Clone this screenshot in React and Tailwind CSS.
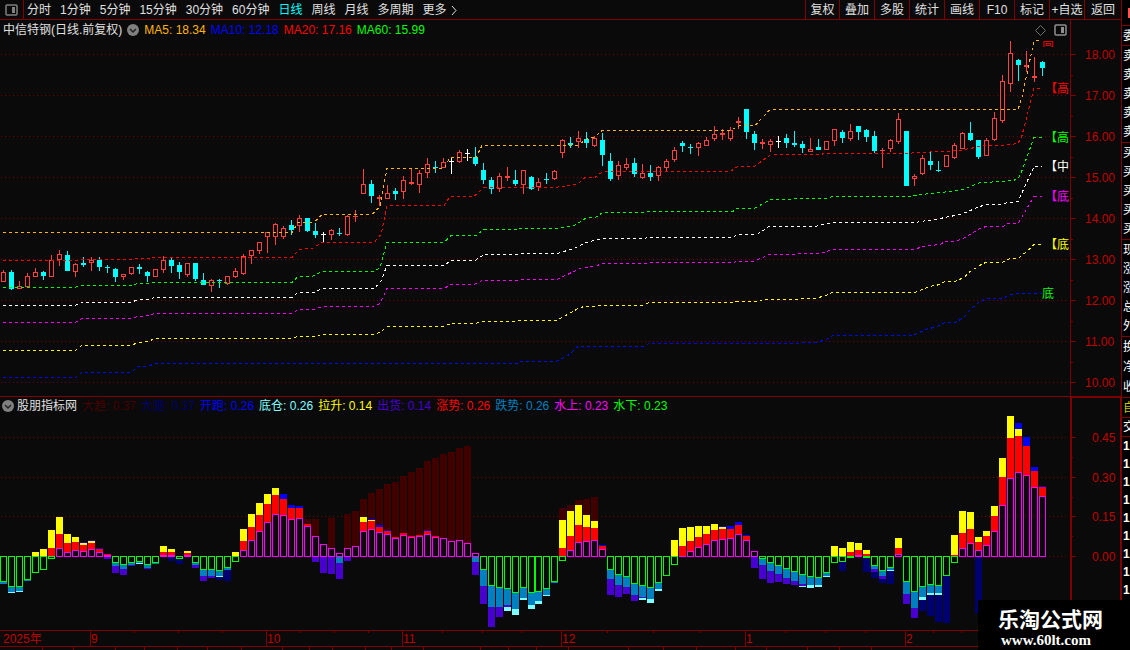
import React, { useState } from "react";

const periods = [
  "分时", "1分钟", "5分钟", "15分钟", "30分钟", "60分钟",
  "日线", "周线", "月线", "多周期", "更多",
];

const tools = ["复权", "叠加", "多股", "统计", "画线", "F10", "标记", "+自选", "返回"];

const averages = [
  { text: "MA5: 18.34", color: "text-[#ffb400]" },
  { text: "MA10: 12.18", color: "text-[#0000ff]" },
  { text: "MA20: 17.16", color: "text-[#ff0000]" },
  { text: "MA60: 15.99", color: "text-[#00ff00]" },
];

const indicators = [
  { text: "大趋: 0.37", color: "text-[#480000]" },
  { text: "大驱: 0.37", color: "text-[#000070]" },
  { text: "开跑: 0.26", color: "text-[#0000ff]" },
  { text: "底仓: 0.26", color: "text-[#80ffff]" },
  { text: "拉升: 0.14", color: "text-[#ffff00]" },
  { text: "出货: 0.14", color: "text-[#4800d0]" },
  { text: "涨势: 0.26", color: "text-[#ff0000]" },
  { text: "跌势: 0.26", color: "text-[#0080c0]" },
  { text: "水上: 0.23", color: "text-[#ff00ff]" },
  { text: "水下: 0.23", color: "text-[#00ff00]" },
];

// one candle per entry: kind, high, body top, body bottom, low
const candles = `
r270,272,282,282 c270,272,289,290 r281,286,289,289 r273,276,287,287 r268,272,277,277
c271,272,276,280 r255,260,277,277 r250,254,260,266 c251,255,271,271 r263,264,272,277
c257,263,265,267 r257,260,263,271 c257,260,267,271 c265,267,268,273 c268,269,277,282
r274,274,277,280 r267,267,274,275 c264,267,269,274 c271,272,276,282 r269,269,277,277
r256,260,270,273 c258,260,266,273 c262,265,272,279 r263,263,275,277 c263,263,279,281
c273,280,285,285 r279,280,286,292 c279,280,281,288 r276,276,284,285 r268,271,277,278
r254,256,274,275 r250,250,256,264 r242,242,251,254 r232,232,237,253 r223,224,237,245
r226,228,237,239 c220,225,230,235 r215,218,226,232 c218,218,231,232 c223,231,235,238
w232,234,235,242 r229,230,235,240 c228,233,234,236 r215,216,235,236 r210,216,217,222
r169,184,194,194 c180,184,196,203 r195,197,199,206 r185,193,199,199 c188,191,194,200
r176,180,192,199 r169,182,184,185 r170,173,185,193 r158,164,173,178 c161,167,168,173
r158,162,168,168 w158,161,162,174 r150,152,162,163 w149,153,154,161 c147,157,164,166
c163,170,180,184 c177,180,189,194 r173,176,189,192 r167,176,178,181 c170,180,184,186
r170,170,185,194 c176,177,189,190 r178,182,187,191 c173,179,180,184 r170,171,179,180
r139,140,153,158 c137,143,145,148 r131,138,142,148 c132,139,143,148 r136,138,146,147
c133,140,155,166 c153,161,179,181 r161,165,176,180 r158,164,168,170 c158,163,174,177
r164,173,178,179 c165,173,177,181 r166,167,176,181 r159,161,168,172 r147,150,160,162
c141,143,146,152 c144,147,148,154 r142,143,148,156 r137,140,146,146 r126,134,139,141
r129,133,135,140 r127,130,139,141 r117,121,123,129 c109,109,132,139 c131,134,143,150
r139,142,144,149 r139,141,145,152 w136,141,142,148 c134,138,143,148 c131,143,145,147
c141,144,148,153 r138,149,152,152 c139,147,150,150 r141,141,150,150 r129,129,141,146
c130,132,138,143 r124,131,139,141 c126,126,132,140 c129,130,137,142 c131,136,151,153
r148,150,151,168 r139,140,149,152 r113,119,142,144 c131,131,186,186 r174,176,179,186
r155,158,174,175 c152,161,165,170 c161,170,171,172 r155,155,167,167 r143,145,158,159
r132,133,149,149 c122,133,140,141 c140,140,157,159 r138,140,156,156 r112,118,140,141
r75,81,121,123 r41,53,84,92 c59,60,65,81 r51,65,67,72 r57,76,78,82 c61,62,68,76
`
  .trim()
  .split(/\s+/)
  .map((entry) => {
    const [high, top, bottom, low] = entry.slice(1).split(",").map(Number);
    return { kind: entry[0], high, top, bottom, low };
  });

const bands = [
  {
    color: "#ffb414",
    points:
      "3,232 292,232 298,222 312,222 316,220 322,214 372,214 380,206 387,168 444,168 450,157 476,157 482,145 577,145 588,138 594,137 602,130 730,130 740,125 755,125 770,109 1018,109 1022,97 1034,40 1042,40",
  },
  {
    color: "#ff0000",
    points:
      "3,260 80,260 82,259 134,259 136,258 150,258 155,257 292,257 299,249 312,248 322,242 374,242 381,234 387,205 444,205 450,196 474,196 484,187 553,187 563,186 577,184 585,177 595,177 603,171 730,171 738,166 754,166 771,154 820,154 825,153 905,153 920,152 960,150 975,147 983,145 1004,145 1018,143 1022,135 1034,88 1042,88",
  },
  {
    color: "#00ff00",
    points:
      "3,287 75,287 80,285 131,285 138,283 148,283 155,282 292,282 298,276 312,276 322,271 374,271 380,267 387,242 444,242 451,235 476,235 484,229 515,229 519,228 555,228 574,225 587,217 595,217 603,212 645,212 649,211 733,211 737,208 754,208 771,199 790,199 798,198 828,198 832,196 908,196 930,193 960,190 980,182 1004,181 1018,179 1022,170 1034,137 1042,137",
  },
  {
    color: "#ffffff",
    points:
      "3,305 75,305 82,302 131,302 138,299 148,299 155,297 292,297 298,292 314,292 322,288 373,288 380,283 387,265 444,265 451,260 475,260 484,254 517,254 520,253 557,253 574,248 586,242 602,238 644,238 648,237 733,237 737,234 757,234 769,226 815,226 832,222 915,222 940,218 955,215 963,213 980,206 986,204 1000,204 1008,202 1018,201 1034,166 1042,166",
  },
  {
    color: "#ff00ff",
    points:
      "3,322 75,322 82,318 131,318 138,316 148,315 155,313 292,313 298,309 314,309 322,306 373,306 380,303 387,288 444,288 451,284 474,284 482,280 517,280 520,279 557,279 582,267 596,266 601,263 645,263 649,262 733,262 737,261 754,261 769,254 796,254 799,253 821,253 832,249 915,249 922,246 940,244 945,241 955,241 963,238 980,228 986,226 1003,226 1008,223 1018,223 1034,196 1042,196",
  },
  {
    color: "#ffff00",
    points:
      "3,350 75,350 82,345 131,345 138,342 148,341 155,338 292,338 297,336 317,336 321,334 372,334 380,332 387,326 443,326 451,323 475,323 482,321 515,321 520,320 556,320 562,317 580,307 585,306 596,306 600,305 643,305 649,302 732,302 736,301 757,301 768,299 797,299 801,298 815,298 826,295 832,292 915,292 930,286 940,284 945,281 955,281 964,277 970,271 983,263 986,262 1002,262 1010,258 1018,258 1028,250 1034,244 1042,244",
  },
  {
    color: "#0000ff",
    points:
      "3,377 75,377 82,372 131,372 138,366 148,366 155,363 517,363 520,361 556,361 568,355 578,346 643,346 649,343 797,343 801,342 817,342 826,339 833,335 913,335 928,328 935,327 945,322 955,322 964,317 970,309 980,301 987,298 1003,298 1010,294 1018,293 1042,293",
  },
];

// stacked bars around the zero line; m, r, y, b, d grow upwards, the rest downwards
const stacks = `
g582,s584 g587,s592,c593 g587,s591,c592 g580,s581 g573,y552 g570,y549 g559,r548,y530
m548,r534,y517 m552,r543,y534 m550,r542,y537 m551,r545,y543,b542 m549,r543,y541,b540
m552,r549,b548 m555,r554,p559 g563,s566,p573 g565,s569,p575 g563,s565,p566 g562,s563,c564
g565,s568,p569 g563,s564 m555,r552,y546 m555,r552,y549,n561 g559,n564 m555,r553,y551
g563,s565,p568 g570,s576,p581 g570,s576,p578 g571,s576,c577,n580 g568,s570,n581 g562,y552
m550,r541,y529 m540,r527,y514 m531,r515,y503 m522,r504,y494 m514,r495,y488 m515,r499,b494
m519,r508,b505 m518,r508,b506 m526,r524,d519 m536,d519,p562 m544,p573 m548,d518,p574
m553,s563,p579 m548,d514,p561 m546,d511 m531,r522,y517,d499 m529,r521,y520,b519,d493
m532,r527,b525,d489 m534,r531,b530,d484 m538,r537,d482 m535,r533,d476 m537,r536,d472
m536,r535,d468 m534,r531,b530,d461 m537,r536,d458 m538,d454 m541,d452 m540,d448 m543,d446
m553,s562,p575 g570,s586,p604 g586,s607,p627 g588,s607,p617 g589,s605,p607,c611
g593,s609,c615 g588,s598,c600 g593,s605,c609 g592,s601,c604 g589,s595,c596 g582,s583
g561,r548,y520,d508 m550,r536,y511,d505 m542,r525,y505,d500 m541,r527,y515,d499
m540,r528,y521,d497 m549,r546,b545 g570,s579,p595 g575,s585,p597 g577,s587,p594
g584,s595,p601 g586,s597,p598,c600 g588,s599,c603 g583,s589,c591 g576 g565,y540
m556,r546,y528 m551,r541,y527 m547,r537,y526 m544,r534,y526 m540,r530,y524
m539,r529,y527,b526 m538,r529,b526 m534,r525,b522 m540,r536,b535 m551,p568 g559,s565,p579
g563,s571,p583 g566,s574,p582 g569,s578,p584 g572,s581,p585 g575,s584,p586,c587
g577,s585,c588 g578,s585,c587 g573,s576,c577 g563,y546 g562,y548,n571 g558,r552,y542
m555,r550,y543 g558,r554,y550,n572 g566,s569,p572,n578 g571,s576,p579,n583
g568,s570,c571,n584 m554,r548,y538 g582,s594,p604 g592,s608,p618 g587,s597,c600,n611
g585,s593,c595,n616 g586,s593,c595,n622 g576,n623 g563,r555,y535 m548,r533,y511
m543,r529,y512 m550,r542,y537,n613 m545,r536,y531 m531,r516,y506 m505,r477,y458
m478,r438,y416 m472,r436,y429,b423 m475,r446,b437 m487,r471,b467 m496,r487,b486
`
  .trim()
  .split(/\s+/)
  .map((bar) => bar.split(",").map((part) => ({ key: part[0], end: Number(part.slice(1)) })));

const stackColors = {
  m: "#ff00ff",
  g: "#00ff00",
  r: "#ff0000",
  y: "#ffff00",
  b: "#0000ff",
  d: "#400000",
  s: "#0080c0",
  p: "#4800d0",
  c: "#80ffff",
  n: "#000070",
};

const priceRows = [54, 95, 136, 177, 218, 259, 300, 341, 382];
const valueRows = [
  { y: 437, label: "0.45" },
  { y: 477, label: "0.30" },
  { y: 516, label: "0.15" },
  { y: 556, label: "0.00" },
];

const bandLabels = [
  { y: 88, text: "【高", color: "#ff0000" },
  { y: 137, text: "【高", color: "#00ff00" },
  { y: 166, text: "【中", color: "#ffffff" },
  { y: 196, text: "【底", color: "#ff00ff" },
  { y: 244, text: "【底", color: "#ffff00" },
];

const months = [
  { x: 90, label: "9" },
  { x: 266, label: "10" },
  { x: 402, label: "11" },
  { x: 561, label: "12" },
  { x: 745, label: "1" },
  { x: 905, label: "2" },
];
const weekTicks = [134, 178, 222, 300, 334, 368, 442, 482, 521, 607, 653, 699, 785, 825, 865, 933, 961];
const tabEdges = [
  42, 73, 115, 144, 177, 207, 241, 282, 309, 332, 365, 391, 423, 480, 508, 536, 568, 628, 663,
  696, 735, 766, 807, 839, 871,
];

const quoteGroups = [
  { rows: ["委"], height: "h-5" },
  { rows: ["卖", "卖", "卖", "卖", "卖"], height: "h-[97px]" },
  { rows: ["买", "买", "买", "买", "买"], height: "h-[97px]" },
  { rows: ["现", "涨", "涨", "总", "外"], height: "h-[97px]" },
  { rows: ["换", "净", "收"], height: "h-[61px]" },
];

const centerX = (i) => (i < 67 ? 3 : 2) + i * 8;

const PanelIcon = ({ color }) => (
  <svg width="13" height="12" viewBox="0 0 13 12" fill="none">
    <rect x="1" y="1" width="11" height="10" rx="1" stroke={color} strokeWidth="1.5" />
    <rect x="7" y="3" width="3" height="6" fill={color} />
  </svg>
);

const FoldButton = ({ label }) => (
  <button aria-label={label} className="shrink-0">
    <svg width="12" height="12" viewBox="0 0 12 12">
      <circle cx="6" cy="6" r="6" fill="#808080" />
      <path d="M3 5l3 3 3-3" fill="none" stroke="#202020" strokeWidth="1.5" />
    </svg>
  </button>
);

const GridLine = ({ y }) => (
  <line x1="1" x2="1066" y1={y + 0.5} y2={y + 0.5} stroke="#780000" strokeDasharray="1 3" />
);

const Candle = ({ x, kind, high, top, bottom, low }) => {
  const color = kind === "r" ? "#ff4040" : kind === "c" ? "#00ffff" : "#ffffff";
  const hollow = kind === "r" && bottom - top > 2;
  return (
    <g fill={color}>
      {top > high && <rect x={x} y={high} width="1" height={top - high} />}
      {low > bottom && <rect x={x} y={bottom} width="1" height={low - bottom} />}
      {hollow ? (
        <rect
          x={x - 1.5}
          y={top + 0.5}
          width="4"
          height={bottom - top - 1}
          fill="#0a0a0a"
          stroke={color}
        />
      ) : (
        <rect x={x - 2} y={top} width="5" height={bottom - top} />
      )}
    </g>
  );
};

const Stack = ({ x, parts }) => {
  let up = 556;
  let down = 557;
  return parts.map(({ key, end }) => {
    const color = stackColors[key];
    if (key === "m" || key === "g") {
      const top = key === "m" ? end : 556;
      const bottom = key === "m" ? 557 : end;
      if (key === "m") up = end;
      else down = end;
      return bottom - top < 3 ? (
        <rect key={key} x={x - 3} y={top} width="7" height={bottom - top} fill={color} />
      ) : (
        <rect
          key={key}
          x={x - 2.5}
          y={top + 0.5}
          width="6"
          height={bottom - top - 1}
          fill="none"
          stroke={color}
        />
      );
    }
    let y;
    let height;
    if ("rybd".includes(key)) {
      y = end;
      height = up - end;
      up = end;
    } else {
      y = down;
      height = end - down;
      down = end;
    }
    return <rect key={key} x={x - 3} y={y} width="7" height={height} fill={color} />;
  });
};

const PriceChart = () => (
  <svg className="block h-[356px] w-full" shapeRendering="crispEdges" role="img" aria-label="日线">
    <defs>
      <clipPath id="topLabel">
        <rect x="1040" y="41" width="20" height="8" />
      </clipPath>
    </defs>
    <g transform="translate(0 -40)">
      {priceRows.map((y) => (
        <GridLine key={y} y={y} />
      ))}
      {candles.map((candle, i) => (
        <Candle key={i} x={centerX(i)} {...candle} />
      ))}
      <g transform="translate(0 0.5)" fill="none" strokeDasharray="3 3">
        {bands.map((band) => (
          <polyline key={band.color} points={band.points} stroke={band.color} />
        ))}
      </g>
      <g fontSize="12">
        <text x="1042" y="46" fill="#ff0000" clipPath="url(#topLabel)">
          高
        </text>
        {bandLabels.map((label) => (
          <text key={label.y} x="1045" y={label.y + 5} fill={label.color}>
            {label.text}
          </text>
        ))}
        <text x="1042" y="298" fill="#00ff00">
          底
        </text>
      </g>
    </g>
  </svg>
);

const PriceAxis = () => (
  <svg className="block h-[376px] w-full" shapeRendering="crispEdges">
    <g transform="translate(0 -20)" fontSize="12" fill="#c00000">
      {priceRows.map((y, i) => (
        <g key={y}>
          <rect x="0" y={y} width="5" height="1" fill="#800000" />
          {i < 8 && <rect x="0" y={y + 21} width="2" height="1" fill="#800000" />}
          <text x="14" y={y + 5}>
            {(18 - i).toFixed(2)}
          </text>
        </g>
      ))}
    </g>
  </svg>
);

const StackChart = () => (
  <svg className="block h-[215px] w-full" shapeRendering="crispEdges" role="img" aria-label="股朋指标网">
    <g transform="translate(0 -415)">
      {valueRows.map((row) => (
        <GridLine key={row.y} y={row.y} />
      ))}
      {stacks.map((parts, i) => (
        <Stack key={i} x={centerX(i)} parts={parts} />
      ))}
    </g>
  </svg>
);

const ValueAxis = () => (
  <svg className="block h-[232px] w-full" shapeRendering="crispEdges">
    <g transform="translate(0 -398)" fontSize="12" fill="#c00000">
      {valueRows.map((row, i) => (
        <g key={row.y}>
          <rect x="0" y={row.y} width="4" height="1" fill="#800000" />
          {i < 3 && <rect x="0" y={row.y + 20} width="1" height="1" fill="#800000" />}
          <text x="20" y={row.y + 5}>
            {row.label}
          </text>
        </g>
      ))}
    </g>
  </svg>
);

const TimeAxis = () => (
  <svg className="block h-[15px] w-full" shapeRendering="crispEdges">
    <g fontSize="12" fill="#c00000">
      <text x="3" y="12">
        2025年
      </text>
      {months.map((month) => (
        <g key={month.x}>
          <rect x={month.x} y="0" width="1" height="15" fill="#800000" />
          <text x={month.x + 1} y="12">
            {month.label}
          </text>
        </g>
      ))}
      {weekTicks.map((x) => (
        <rect key={x} x={x} y="0" width="1" height="2" fill="#800000" />
      ))}
    </g>
  </svg>
);

const App = () => {
  const [period, setPeriod] = useState("日线");

  return (
    <div className="relative flex overflow-hidden bg-[#0a0a0a] font-['Liberation_Sans','Noto_Sans_CJK_SC',sans-serif] text-xs leading-4 text-[#e0e0e0]">
      <main className="min-w-0 flex-1">
        <header className="flex h-5 border-b border-[#800000]">
          <button
            aria-label="侧栏"
            className="flex w-6 shrink-0 items-center justify-center border-r border-[#800000]"
          >
            <PanelIcon color="#808080" />
          </button>
          <nav className="flex flex-1 items-center gap-[9px] overflow-hidden pl-[3px] whitespace-nowrap">
            {periods.map((name) => (
              <button
                key={name}
                onClick={() => setPeriod(name)}
                className={name === period ? "text-[#00ffff]" : ""}
              >
                {name}
                {name === "更多" && (
                  <svg className="ml-1 inline align-[-1px]" width="6" height="9" viewBox="0 0 6 9">
                    <path d="M1 0l4 4.500-4 4.500" fill="none" stroke="#e0e0e0" />
                  </svg>
                )}
              </button>
            ))}
          </nav>
          <div className="flex shrink-0">
            {tools.map((name) => (
              <button
                key={name}
                className="w-[35px] border-l border-[#800000] whitespace-nowrap first:w-[34px] last:w-[37px]"
              >
                {name}
              </button>
            ))}
          </div>
        </header>

        <section className="flex border-b border-[#800000]">
          <div className="min-w-0 flex-1">
            <div className="flex h-5 items-center gap-[5px] pr-[3px] pl-[3px] whitespace-nowrap">
              <h1>中信特钢(日线.前复权)</h1>
              <FoldButton label="主图" />
              {averages.map((item) => (
                <span key={item.text} className={item.color}>
                  {item.text}
                </span>
              ))}
              <div className="ml-auto flex items-center gap-2">
                <svg width="11" height="11" viewBox="0 0 11 11">
                  <path d="M5.500 0.500l5 5-5 5-5-5z" fill="none" stroke="#707070" />
                </svg>
                <button aria-label="右栏">
                  <PanelIcon color="#909090" />
                </button>
              </div>
            </div>
            <PriceChart />
          </div>
          <div className="w-[51px] shrink-0 border-l border-[#800000]">
            <PriceAxis />
          </div>
        </section>

        <section className="flex">
          <div className="min-w-0 flex-1">
            <div className="flex h-[17px] items-center gap-[5px] pl-[2px] whitespace-nowrap">
              <div className="flex items-center gap-[3px]">
                <FoldButton label="副图" />
                <h2>股朋指标网</h2>
              </div>
              {indicators.map((item) => (
                <span key={item.text} className={item.color}>
                  {item.text}
                </span>
              ))}
            </div>
            <div className="pt-px">
              <StackChart />
            </div>
          </div>
          <div className="w-[51px] shrink-0 border-t border-r border-l-2 border-[#800000]">
            <ValueAxis />
          </div>
        </section>

        <div className="border-y border-[#800000]">
          <TimeAxis />
        </div>
        <svg className="block h-[3px] w-full" shapeRendering="crispEdges">
          {tabEdges.map((x) => (
            <rect key={x} x={x} y="0" width="1" height="3" fill="#800000" />
          ))}
        </svg>
      </main>

      <aside className="w-[9px] shrink-0 overflow-hidden border-l border-[#800000] bg-black text-white">
        <div className="flex h-[26px] items-center border-b border-[#800000] pl-[6px]">
          <span className="h-[10px] w-1 bg-[#ff5050]" />
        </div>
        {quoteGroups.map((group, i) => (
          <div
            key={i}
            className={`flex flex-col justify-around border-b border-[#800000] pl-px ${group.height}`}
          >
            {group.rows.map((row, j) => (
              <span key={j} className="w-3">
                {row}
              </span>
            ))}
          </div>
        ))}
        <div className="flex h-5 items-center border-b border-[#800000] pl-px text-[#c8c800]">
          <span className="w-3 shrink-0">自</span>
        </div>
        <div className="flex h-[19px] items-center border-b border-[#800000] pl-px">
          <span className="w-3 shrink-0">交</span>
        </div>
        {[1, 2, 3, 4, 5, 6, 7, 8, 9].map((row) => (
          <div key={row} className="h-[18px] pl-px text-xs leading-[18px] font-bold">
            1
          </div>
        ))}
      </aside>

      <div className="absolute right-0 bottom-0 flex h-[50px] w-[152px] flex-col bg-black pt-1 pl-5 text-white">
        <span className="font-['Noto_Sans_CJK_SC',sans-serif] text-[21px] leading-7 font-bold whitespace-nowrap">
          乐淘公式网
        </span>
        <a
          href="#home"
          className="pl-[3px] font-['Liberation_Serif',serif] text-[15px] leading-4 font-bold"
        >
          www.60lt.com
        </a>
      </div>
    </div>
  );
};

export default App;
